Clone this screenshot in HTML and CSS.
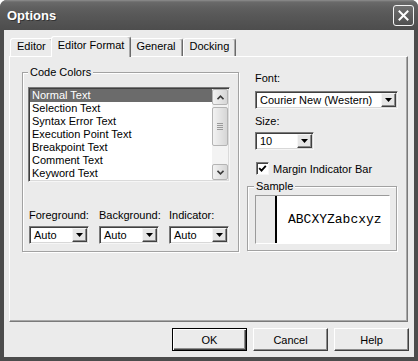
FILE: index.html
```html
<!DOCTYPE html>
<html lang="en">
<head>
    <meta charset="UTF-8">
    <title>Options</title>
    <link rel="stylesheet" href="styles.css">
</head>
<body>
    <div class="window">
        <div class="titlebar">
            <span class="title">Options</span>
            <span class="close">
                <svg width="11" height="11" viewBox="0 0 11 11"><path d="M1.5 1.5L9.5 9.5M9.5 1.5L1.5 9.5" stroke="#fff" stroke-width="2" stroke-linecap="square"/></svg>
            </span>
        </div>
        <div class="client">
            <div class="tabs">
                <div class="tab">Editor</div>
                <div class="tab active">Editor Format</div>
                <div class="tab">General</div>
                <div class="tab">Docking</div>
            </div>
            <div class="panel">
                <fieldset class="group colors">
                    <legend>Code Colors</legend>
                    <div class="listbox">
                        <ul class="items">
                            <li class="selected">Normal Text</li>
                            <li>Selection Text</li>
                            <li>Syntax Error Text</li>
                            <li>Execution Point Text</li>
                            <li>Breakpoint Text</li>
                            <li>Comment Text</li>
                            <li>Keyword Text</li>
                        </ul>
                        <div class="scrollbar">
                            <div class="sb-btn">
                                <svg width="7" height="5" viewBox="0 0 7 5"><path d="M0.5 4.2L3.5 1.2L6.5 4.2" fill="none" stroke="#3c3c3c" stroke-width="1.6"/></svg>
                            </div>
                            <div class="sb-thumb">
                                <svg width="6" height="7" viewBox="0 0 6 7"><path d="M0 0.5h6M0 2.5h6M0 4.5h6M0 6.5h6" stroke="#9a9a9a"/></svg>
                            </div>
                            <div class="sb-track"></div>
                            <div class="sb-btn">
                                <svg width="7" height="5" viewBox="0 0 7 5"><path d="M0.5 0.8L3.5 3.8L6.5 0.8" fill="none" stroke="#3c3c3c" stroke-width="1.6"/></svg>
                            </div>
                        </div>
                    </div>
                    <div class="pickers">
                        <div class="picker">
                            <div class="label">Foreground:</div>
                            <div class="combo">Auto<span class="drop"><svg width="7" height="4" viewBox="0 0 7 4"><path d="M0 0h7L3.5 4z"/></svg></span></div>
                        </div>
                        <div class="picker">
                            <div class="label">Background:</div>
                            <div class="combo">Auto<span class="drop"><svg width="7" height="4" viewBox="0 0 7 4"><path d="M0 0h7L3.5 4z"/></svg></span></div>
                        </div>
                        <div class="picker">
                            <div class="label">Indicator:</div>
                            <div class="combo">Auto<span class="drop"><svg width="7" height="4" viewBox="0 0 7 4"><path d="M0 0h7L3.5 4z"/></svg></span></div>
                        </div>
                    </div>
                </fieldset>
                <div class="side">
                    <div class="label font-label">Font:</div>
                    <div class="combo font-combo">Courier New (Western)<span class="drop"><svg width="7" height="4" viewBox="0 0 7 4"><path d="M0 0h7L3.5 4z"/></svg></span></div>
                    <div class="label size-label">Size:</div>
                    <div class="combo size-combo">10<span class="drop"><svg width="7" height="4" viewBox="0 0 7 4"><path d="M0 0h7L3.5 4z"/></svg></span></div>
                    <div class="check">
                        <span class="checkbox">
                            <svg width="9" height="9" viewBox="0 0 9 9"><path d="M1.2 4.2L3.5 6.6L7.8 1.8" fill="none" stroke="#000" stroke-width="1.8"/></svg>
                        </span>
                        Margin Indicator Bar
                    </div>
                    <fieldset class="group sample">
                        <legend>Sample</legend>
                        <div class="sample-box">
                            <div class="margin-bar"></div>
                            <div class="sample-text">ABCXYZabcxyz</div>
                        </div>
                    </fieldset>
                </div>
            </div>
            <div class="buttons">
                <button class="btn default">OK</button>
                <button class="btn">Cancel</button>
                <button class="btn">Help</button>
            </div>
        </div>
    </div>
</body>
</html>
```

FILE: styles.css
```css
* {
    box-sizing: border-box;
}
body {
    margin: 0;
    font-family: 'Liberation Sans', Arial, sans-serif;
    font-size: 11px;
    color: #000;
    background: #fff;
}
.window {
    width: 418px;
    height: 361px;
    display: flex;
    flex-direction: column;
    background: #4c4c4c;
    border-radius: 7px 7px 0 0;
    overflow: hidden;
}
.titlebar {
    height: 30px;
    flex: none;
    display: flex;
    align-items: center;
    justify-content: space-between;
    padding: 0 4px 0 7px;
    background: linear-gradient(to bottom, #8e8e8e 0, #6a6a6a 2px, #5f5f5f 8px, #585858 50%, #4d4d4d 100%);
}
.title {
    color: #fff;
    font-weight: bold;
    font-size: 13px;
    text-shadow: 1px 1px #333;
}
.close {
    width: 21px;
    height: 21px;
    border: 1px solid #f4f4f4;
    border-radius: 3px;
    background: linear-gradient(to bottom, #707070, #505050);
    display: flex;
    align-items: center;
    justify-content: center;
}
.client {
    flex: 1;
    margin: 0 4px 4px;
    padding: 6px 5px 0 5px;
    background: #ebebeb;
    display: flex;
    flex-direction: column;
}
.tabs {
    display: flex;
    align-items: flex-end;
    height: 20px;
    padding-left: 1px;
    position: relative;
    z-index: 1;
}
.tab {
    height: 18px;
    padding: 1px 6px 0;
    line-height: 13px;
    border: 1px solid #fff;
    border-right-color: #6a6a6a;
    border-bottom: none;
    border-radius: 3px 3px 0 0;
    box-shadow: inset -1px 0 #a8a8a8;
}
.tab.active {
    height: 21px;
    margin: 0 -2px -1px;
    padding: 2px 6px 0;
    background: #ebebeb;
    position: relative;
    z-index: 1;
}
.panel {
    width: 399px;
    height: 266px;
    display: flex;
    gap: 8px;
    padding: 9px 0 0 12px;
    border: 1px solid;
    border-color: #fff #7a7a7a #7a7a7a #fff;
    box-shadow: inset -1px -1px #a8a8a8;
}
.group {
    margin: 0;
    min-width: 0;
    padding: 8px 7px 6px 5px;
    border: 1px solid #a2a2a2;
    box-shadow: inset 1px 1px #fff, 1px 1px #fff;
}
.group legend {
    padding: 0 2px;
    line-height: 13px;
    background: #ebebeb;
}
.colors {
    width: 217px;
    height: 186px;
}
.listbox {
    width: 202px;
    height: 95px;
    display: flex;
    padding: 1px;
    background: #fff;
    border: 1px solid;
    border-color: #7a7a7a #f6f6f6 #f6f6f6 #7a7a7a;
    box-shadow: inset 1px 1px #404040, inset -1px -1px #dadada;
}
.items {
    flex: 1;
    list-style: none;
    margin: 0;
    padding: 0;
}
.items li {
    height: 13px;
    line-height: 13px;
    padding-left: 2px;
    white-space: nowrap;
}
.items .selected {
    background: #6b6b6b;
    color: #fff;
}
.scrollbar {
    width: 16px;
    display: flex;
    flex-direction: column;
    background: #f3f3f3;
}
.sb-btn,
.sb-thumb {
    border: 1px solid #b4b4b4;
    border-radius: 2px;
    background: linear-gradient(to right, #f2f2f2, #d6d6d6);
    display: flex;
    align-items: center;
    justify-content: center;
}
.sb-btn {
    height: 16px;
}
.sb-thumb {
    height: 39px;
    margin-top: 2px;
}
.sb-track {
    flex: 1;
}
.pickers {
    display: flex;
    gap: 10px;
    margin-top: 27px;
    padding-left: 1px;
}
.picker {
    width: 60px;
}
.label {
    line-height: 13px;
}
.picker .label {
    margin-bottom: 4px;
    white-space: nowrap;
}
.combo {
    height: 18px;
    display: flex;
    align-items: center;
    justify-content: space-between;
    padding: 1px 1px 1px 4px;
    background: #fff;
    border: 1px solid;
    border-color: #7a7a7a #f6f6f6 #f6f6f6 #7a7a7a;
    box-shadow: inset 1px 1px #404040, inset -1px -1px #d8d8d8;
    white-space: nowrap;
}
.drop {
    width: 15px;
    height: 14px;
    flex: none;
    display: flex;
    align-items: center;
    justify-content: center;
    background: #e6e6e6;
    border: 1px solid;
    border-color: #f6f6f6 #404040 #404040 #f6f6f6;
    box-shadow: inset -1px -1px #8c8c8c;
}
.side {
    width: 150px;
    display: flex;
    flex-direction: column;
}
.font-label {
    margin: 6px 0 0 8px;
}
.font-combo {
    width: 143px;
    margin: 6px 0 0 8px;
}
.size-label {
    margin: 6px 0 0 8px;
}
.size-combo {
    width: 59px;
    margin: 4px 0 0 8px;
}
.check {
    display: flex;
    align-items: center;
    gap: 4px;
    height: 13px;
    margin: 12px 0 0 9px;
}
.checkbox {
    width: 13px;
    height: 13px;
    display: flex;
    align-items: center;
    justify-content: center;
    background: #fff;
    border: 1px solid;
    border-color: #7a7a7a #f6f6f6 #f6f6f6 #7a7a7a;
    box-shadow: inset 1px 1px #404040;
}
.sample {
    width: 150px;
    margin-top: 5px;
    padding: 2px 7px 6px 7px;
}
.sample legend {
    margin-left: -1px;
}
.sample-box {
    width: 135px;
    height: 49px;
    display: flex;
    background: #fff;
    border: 1px solid;
    border-color: #9a9a9a #fff #fff #9a9a9a;
}
.margin-bar {
    width: 21px;
    background: #ebebeb;
    border-right: 2px solid #000;
}
.sample-text {
    display: flex;
    align-items: center;
    padding-left: 11px;
    font-family: 'Liberation Mono', 'Courier New', monospace;
    font-size: 13px;
}
.buttons {
    display: flex;
    justify-content: flex-end;
    gap: 6px;
    margin-top: 6px;
}
.btn {
    width: 75px;
    height: 23px;
    padding: 0;
    font: inherit;
    color: #000;
    background: #ebebeb;
    border: 1px solid;
    border-color: #fff #404040 #404040 #fff;
    box-shadow: inset -1px -1px #8c8c8c;
}
.btn.default {
    border-color: #000;
    box-shadow: inset 1px 1px #fff, inset -1px -1px #404040, inset -2px -2px #8c8c8c;
}
```
